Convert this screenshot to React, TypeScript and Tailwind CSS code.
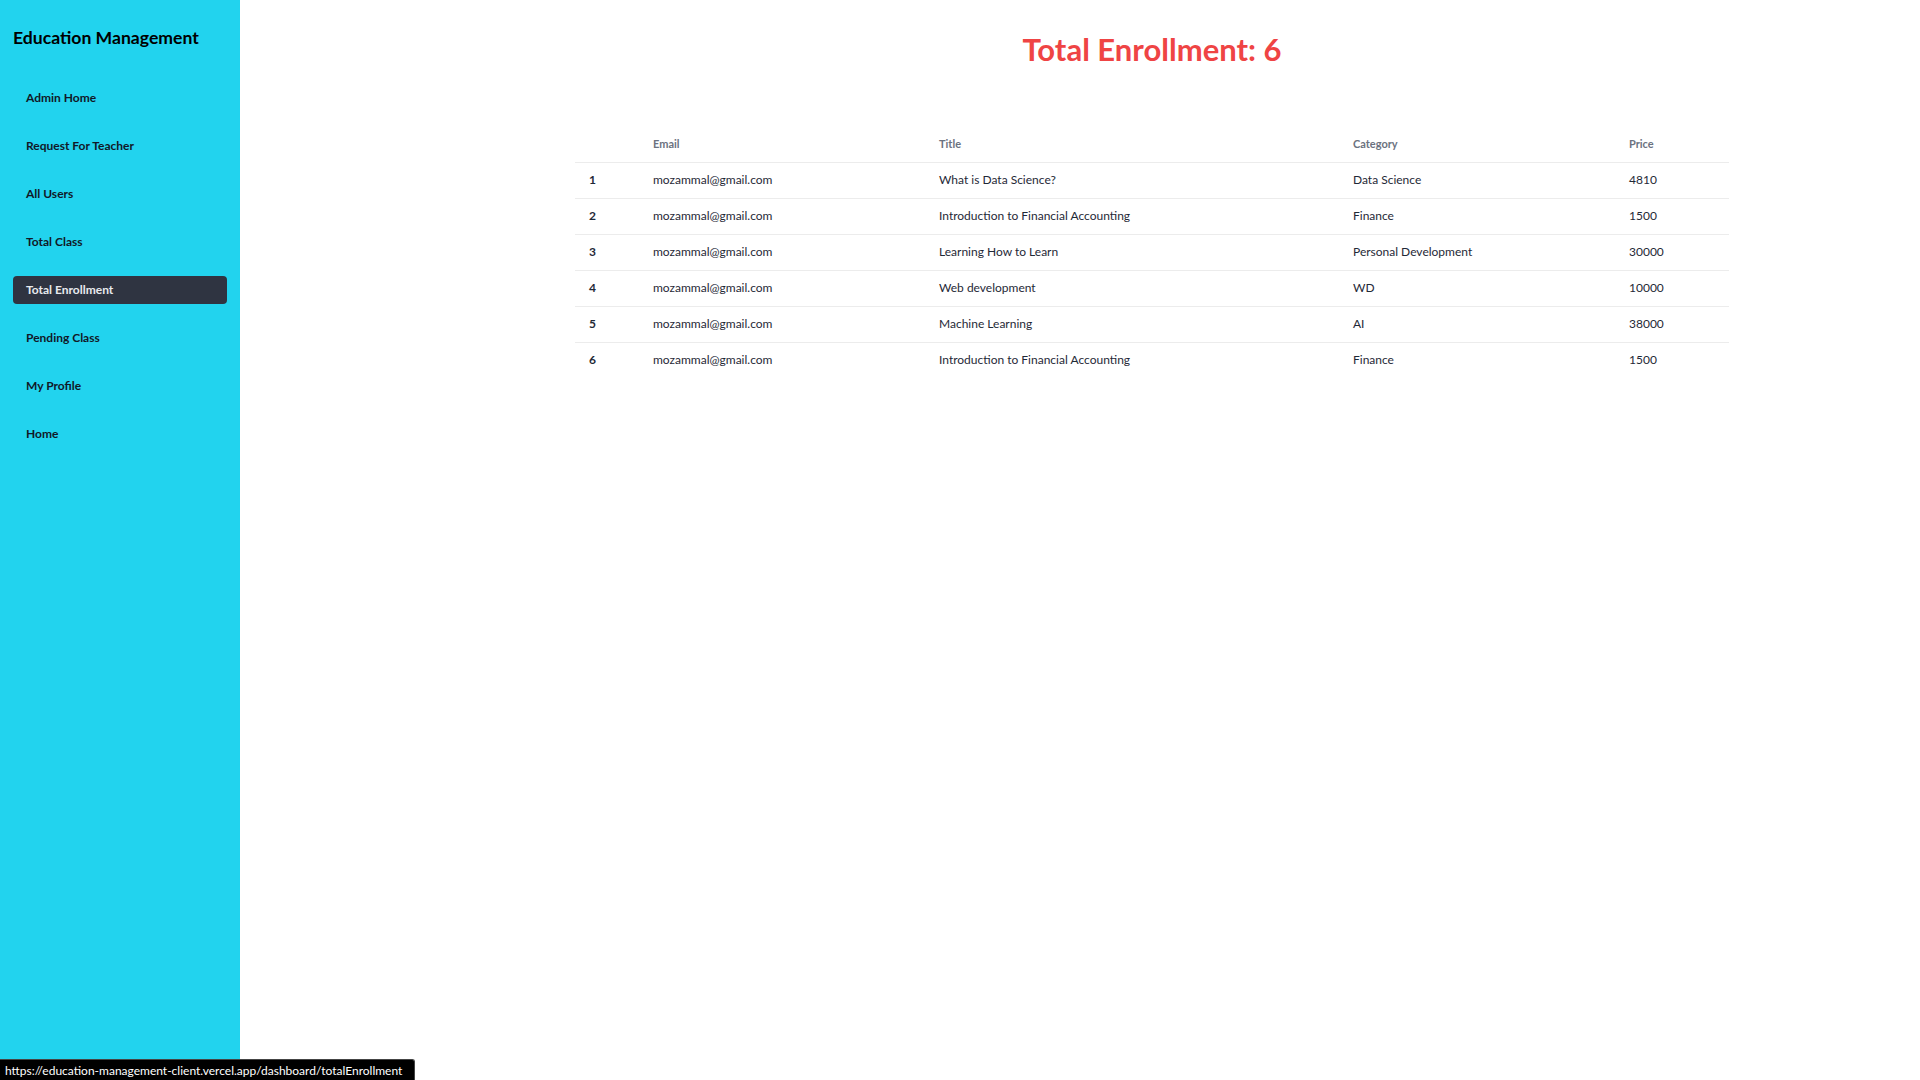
import React from "react";

const items = [
  "Admin Home",
  "Request For Teacher",
  "All Users",
  "Total Class",
  "Total Enrollment",
  "Pending Class",
  "My Profile",
  "Home",
];

const rows = [
  { email: "mozammal@gmail.com", title: "What is Data Science?", category: "Data Science", price: 4810 },
  { email: "mozammal@gmail.com", title: "Introduction to Financial Accounting", category: "Finance", price: 1500 },
  { email: "mozammal@gmail.com", title: "Learning How to Learn", category: "Personal Development", price: 30000 },
  { email: "mozammal@gmail.com", title: "Web development", category: "WD", price: 10000 },
  { email: "mozammal@gmail.com", title: "Machine Learning", category: "AI", price: 38000 },
  { email: "mozammal@gmail.com", title: "Introduction to Financial Accounting", category: "Finance", price: 1500 },
];

export default function App() {
  return (
    <div
      className="flex min-h-screen bg-white"
      style={{ fontFamily: "Lato, 'Noto Sans', sans-serif" }}
    >
      <aside className="w-[240px] shrink-0 bg-[#22d3ee] min-h-screen px-[13px] pt-6">
        <h2 className="text-[17.6px] leading-7 font-bold text-black">Education Management</h2>
        <ul className="mt-8 flex flex-col gap-5">
          {items.map((it) => (
            <li key={it}>
              <a
                className={
                  "flex items-center h-[28px] pl-[13px] rounded text-[12px] font-bold " +
                  (it === "Total Enrollment" ? "bg-[#2f3441] text-[#e8eaee]" : "text-[#111827]")
                }
              >
                {it}
              </a>
            </li>
          ))}
        </ul>
      </aside>
      <main className="flex-1 pl-[144px]">
        <div className="flex flex-col items-center">
          <h1 className="mt-[30px] text-[31px] leading-[38px] font-bold text-[#ef4444]">Total Enrollment: 6</h1>
          <table className="mt-[59px] w-[1154px] text-left text-[12px] text-[#1f2937]">
            <thead>
              <tr className="h-[35px] border-b border-[#ececec] text-[11px] font-bold text-[#6b7280]">
                <th className="w-[62px] pl-[14px]"></th>
                <th className="w-[286px] pl-4">Email</th>
                <th className="w-[414px] pl-4">Title</th>
                <th className="w-[276px] pl-4">Category</th>
                <th className="pl-4">Price</th>
              </tr>
            </thead>
            <tbody>
              {rows.map((r, i) => (
                <tr
                  key={i}
                  className={"h-[36px] " + (i < rows.length - 1 ? "border-b border-[#ececec]" : "")}
                >
                  <th className="pl-[14px] font-bold">{i + 1}</th>
                  <td className="pl-4 font-normal">{r.email}</td>
                  <td className="pl-4 font-normal">{r.title}</td>
                  <td className="pl-4 font-normal">{r.category}</td>
                  <td className="pl-4 font-normal">{r.price}</td>
                </tr>
              ))}
            </tbody>
          </table>
        </div>
      </main>
      <div className="fixed left-0 bottom-0 h-[21px] w-[415px] bg-black text-white text-[12px] leading-[21px] pl-[5px] rounded-tr-[3px] border-t border-r border-[#444] whitespace-nowrap">
        https://education-management-client.vercel.app/dashboard/totalEnrollment
      </div>
    </div>
  );
}
